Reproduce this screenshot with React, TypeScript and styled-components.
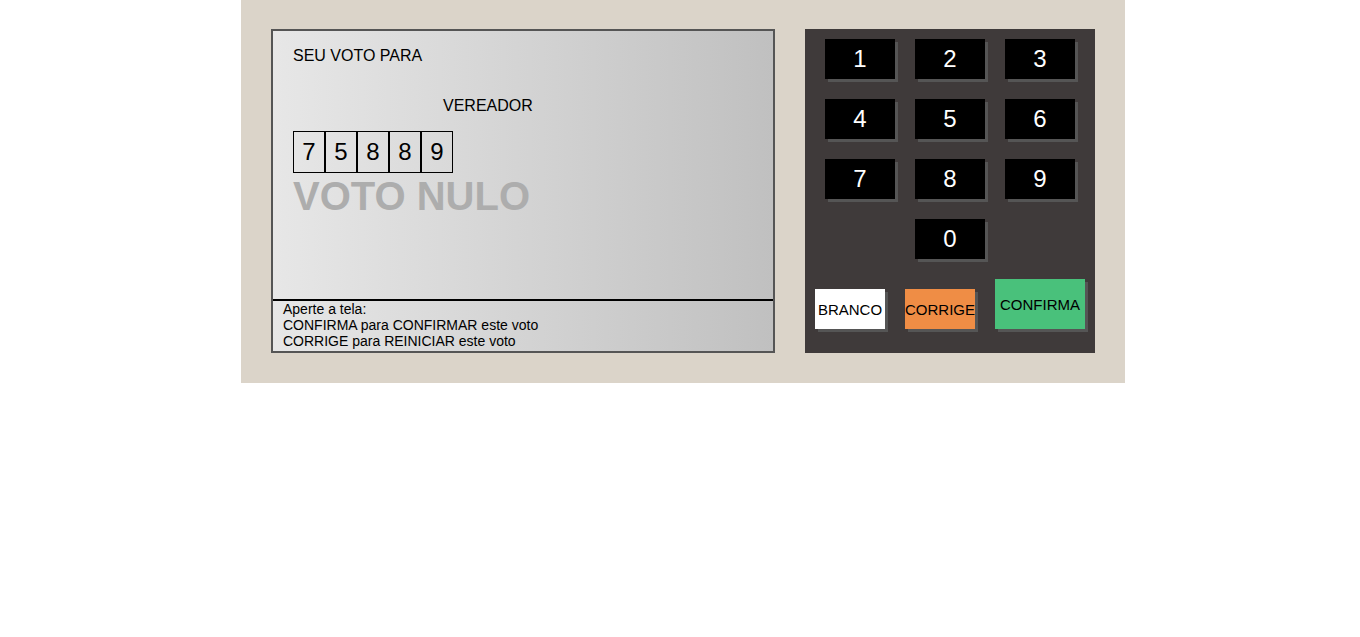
import React from "react";
import styled, { createGlobalStyle } from "styled-components";

const GlobalStyle = createGlobalStyle`
  body {
    margin: 0;
    background: #ffffff;
    font-family: "Liberation Sans", Arial, sans-serif;
  }
`;

const Urna = styled.div`
  display: flex;
  align-items: flex-start;
  gap: 30px;
  width: 884px;
  height: 383px;
  box-sizing: border-box;
  margin-left: 241px;
  padding: 29px 30px 0;
  background-color: #dbd4c9;
`;

const Tela = styled.div`
  display: flex;
  flex-direction: column;
  width: 504px;
  height: 324px;
  box-sizing: border-box;
  border: 2px solid #555555;
  background: linear-gradient(to right, #e7e7e7, #c0c0c0);
`;

const Topo = styled.div`
  height: 270px;
  padding: 16px 20px 0;
  box-sizing: border-box;
  border-bottom: 2px solid #000000;
  color: #000000;
`;

const Label = styled.div<{ $indent?: number }>`
  font-size: 16px;
  line-height: 18px;
  margin-left: ${(p) => p.$indent || 0}px;
`;

const Cargo = styled(Label)`
  margin-top: 32px;
`;

const Digitos = styled.div`
  display: flex;
  margin-top: 16px;
`;

const Digito = styled.div`
  width: 30px;
  height: 40px;
  border: 1px solid #000000;
  display: flex;
  align-items: center;
  justify-content: center;
  font-size: 24px;
`;

const Aviso = styled.div`
  font-size: 40px;
  font-weight: bold;
  color: #adadad;
  line-height: 46px;
`;

const Rodape = styled.div`
  padding: 0 10px;
  font-size: 14px;
  line-height: 16px;
  color: #000000;
`;

const Teclado = styled.div`
  display: flex;
  flex-direction: column;
  align-items: center;
  width: 290px;
  height: 324px;
  box-sizing: border-box;
  padding-top: 10px;
  background-color: #3f3a3a;
`;

const Teclas = styled.div`
  display: grid;
  grid-template-columns: repeat(3, 70px);
  gap: 20px;
`;

const Tecla = styled.div<{ $col?: number }>`
  width: 70px;
  height: 40px;
  background: #000000;
  color: #ffffff;
  font-size: 24px;
  display: flex;
  align-items: center;
  justify-content: center;
  box-shadow: 3px 3px 0 #555555;
  grid-column: ${(p) => (p.$col ? `${p.$col}` : "auto")};
`;

const Acoes = styled.div`
  display: flex;
  align-items: flex-end;
  gap: 20px;
  margin-top: 20px;
`;

const Botao = styled.div<{ $bg: string; $w: number; $h: number }>`
  width: ${(p) => p.$w}px;
  height: ${(p) => p.$h}px;
  background: ${(p) => p.$bg};
  color: #000000;
  font-size: 15px;
  display: flex;
  align-items: center;
  justify-content: center;
  white-space: nowrap;
  box-shadow: 3px 3px 0 #555555;
`;

export default function App() {
  const numero = ["7", "5", "8", "8", "9"];
  return (
    <>
      <GlobalStyle />
      <Urna>
        <Tela>
          <Topo>
            <Label>SEU VOTO PARA</Label>
            <Cargo $indent={150}>VEREADOR</Cargo>
            <Digitos>
              {numero.map((d, i) => (
                <Digito key={i}>{d}</Digito>
              ))}
            </Digitos>
            <Aviso>VOTO NULO</Aviso>
          </Topo>
          <Rodape>
            Aperte a tela:
            <br />
            CONFIRMA para CONFIRMAR este voto
            <br />
            CORRIGE para REINICIAR este voto
          </Rodape>
        </Tela>
        <Teclado>
          <Teclas>
            {["1", "2", "3", "4", "5", "6", "7", "8", "9"].map((n) => (
              <Tecla key={n}>{n}</Tecla>
            ))}
            <Tecla $col={2}>0</Tecla>
          </Teclas>
          <Acoes>
            <Botao $bg="#ffffff" $w={70} $h={40}>
              BRANCO
            </Botao>
            <Botao $bg="#ef8d45" $w={70} $h={40}>
              CORRIGE
            </Botao>
            <Botao $bg="#49c17b" $w={90} $h={50}>
              CONFIRMA
            </Botao>
          </Acoes>
        </Teclado>
      </Urna>
    </>
  );
}
